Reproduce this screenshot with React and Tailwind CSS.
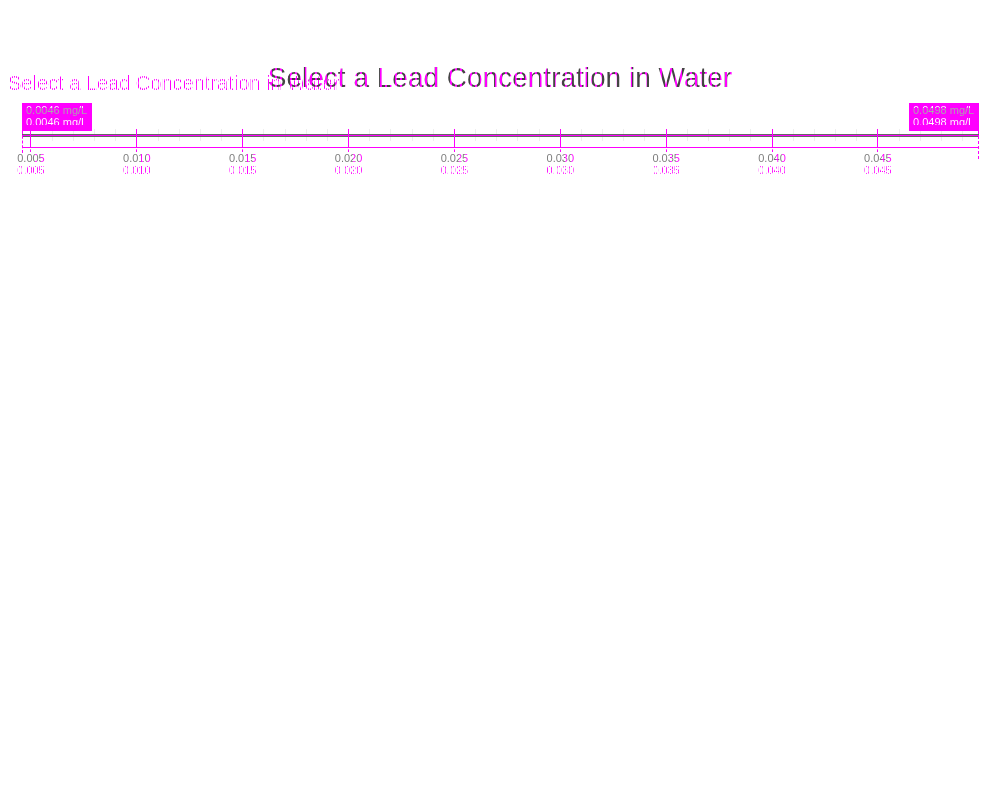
import React from "react";

const LABELS = ["0.005", "0.010", "0.015", "0.020", "0.025", "0.030", "0.035", "0.040", "0.045"];
const MIN = 0.0046;
const MAX = 0.0498;
const percent = (value) => `${((value - MIN) / (MAX - MIN)) * 100}%`;
const MINOR = Array.from({ length: 45 }, (_, i) => i + 5).filter((n) => n % 5 !== 0);

function Badge({ value }) {
  return (
    <output className="relative flex h-7 w-[70px] flex-col bg-[#ff00ff] px-1 pt-px text-[11px] leading-3">
      <span className="whitespace-nowrap bg-[linear-gradient(#ffffff_0_4px,#aaaaaa_4px)] bg-clip-text text-transparent">
        {value} mg/L
      </span>
      <span className="whitespace-nowrap bg-[linear-gradient(#ffffff_0_9px,#ff00ff_9px)] bg-clip-text text-transparent">
        {value} mg/L
      </span>
    </output>
  );
}

export default function App() {
  return (
    <main className="min-h-screen bg-white pt-16 font-['Liberation_Sans',sans-serif]">
      <header className="grid h-[39px]">
        <h2 className="col-start-1 row-start-1 justify-self-start whitespace-nowrap bg-[repeating-linear-gradient(90deg,#ff00ff_0_1px,#ffffff00_1px_2px)] bg-clip-text pl-2 pt-[7px] text-[20px] leading-6 text-transparent">
          Select a Lead Concentration in Water
        </h2>
        <h1 className="col-start-1 row-start-1 whitespace-nowrap bg-[repeating-linear-gradient(90deg,#ff00ff_0_2px,#444444_2px_5px)] bg-clip-text text-center text-[28px] leading-7 text-transparent">
          Select a Lead Concentration in Water
        </h1>
      </header>
      <section className="ml-[22px] mr-[21px]">
        <div className="relative z-10 flex justify-between">
          <Badge value="0.0046" />
          <Badge value="0.0498" />
        </div>
        <div className="relative h-12">
          {MINOR.map((n) => (
            <span key={n} className="absolute -top-0.5 h-3 w-px bg-[#eeeeee]" style={{ left: percent(n / 1000) }} />
          ))}
          <div className="absolute inset-x-0 top-[3px] h-[3px] border-y border-[#666666] bg-[#ff00ff]" />
          <div className="absolute inset-x-0 top-4 h-px bg-[#ff00ff]" />
          <div className="absolute left-0 top-0 h-[22px] border-l border-dashed border-[#ff00ff]" />
          <div className="absolute right-0 top-0 h-7 border-l border-dashed border-[#ff00ff]" />
          {LABELS.map((label) => (
            <div
              key={label}
              className="absolute -top-0.5 flex w-7 -translate-x-1/2 flex-col items-center pl-px text-[11px] leading-3"
              style={{ left: percent(Number(label)) }}
            >
              <div className="h-4 border-l border-[#ff00ff]" />
              <div className="h-[7px] border-l border-dashed border-[#ff00ff]" />
              <span className="bg-[linear-gradient(90deg,#777777_0_18px,#ff00ff_18px_20px,#777777_20px_24px,#ff00ff_24px)] bg-clip-text text-transparent">
                {label}
              </span>
              <span className="bg-[repeating-linear-gradient(90deg,#ff00ff_0_1px,#ffffff00_1px_2px)] bg-clip-text text-transparent">
                {label}
              </span>
            </div>
          ))}
          <input
            type="range"
            aria-label="Minimum lead concentration"
            min={MIN}
            max={MAX}
            step="0.0001"
            defaultValue={MIN}
            className="absolute inset-x-0 top-0 h-2 w-full appearance-none opacity-0"
          />
          <input
            type="range"
            aria-label="Maximum lead concentration"
            min={MIN}
            max={MAX}
            step="0.0001"
            defaultValue={MAX}
            className="absolute inset-x-0 top-3 h-2 w-full appearance-none opacity-0"
          />
        </div>
      </section>
    </main>
  );
}
